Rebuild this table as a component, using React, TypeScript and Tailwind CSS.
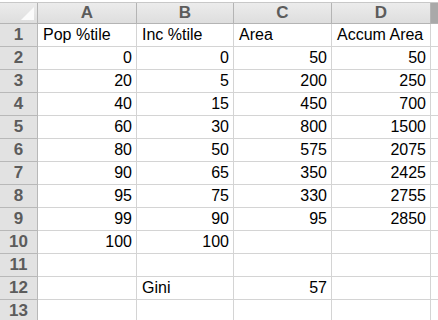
import React from 'react';

const COLS = ['A', 'B', 'C', 'D'];

type Cell = { v: string; num?: boolean };

const ROWS: Cell[][] = [
  [{ v: 'Pop %tile' }, { v: 'Inc %tile' }, { v: 'Area' }, { v: 'Accum Area' }],
  [{ v: '0', num: true }, { v: '0', num: true }, { v: '50', num: true }, { v: '50', num: true }],
  [{ v: '20', num: true }, { v: '5', num: true }, { v: '200', num: true }, { v: '250', num: true }],
  [{ v: '40', num: true }, { v: '15', num: true }, { v: '450', num: true }, { v: '700', num: true }],
  [{ v: '60', num: true }, { v: '30', num: true }, { v: '800', num: true }, { v: '1500', num: true }],
  [{ v: '80', num: true }, { v: '50', num: true }, { v: '575', num: true }, { v: '2075', num: true }],
  [{ v: '90', num: true }, { v: '65', num: true }, { v: '350', num: true }, { v: '2425', num: true }],
  [{ v: '95', num: true }, { v: '75', num: true }, { v: '330', num: true }, { v: '2755', num: true }],
  [{ v: '99', num: true }, { v: '90', num: true }, { v: '95', num: true }, { v: '2850', num: true }],
  [{ v: '100', num: true }, { v: '100', num: true }, { v: '' }, { v: '' }],
  [{ v: '' }, { v: '' }, { v: '' }, { v: '' }],
  [{ v: '' }, { v: 'Gini' }, { v: '57', num: true }, { v: '' }],
  [{ v: '' }, { v: '' }, { v: '' }, { v: '' }],
];

export default function App() {
  return (
    <div className="w-[438px] h-[320px] overflow-hidden bg-white pt-[2px]" style={{ fontFamily: '"Liberation Sans", Arial, sans-serif' }}>
      <div className="grid grid-cols-[38px_99px_97px_98px_99px_1fr] border-t border-[#c8c8c8]">
        {/* column header row */}
        <div className="relative h-[21px] bg-gradient-to-b from-[#ececec] to-[#dedede] border-r border-b border-[#b4b4b4]">
          <div className="absolute right-[3px] bottom-[3px] w-0 h-0 border-l-[13px] border-l-transparent border-b-[13px] border-b-[#fbfbfb]" />
        </div>
        {COLS.map((c) => (
          <div
            key={c}
            className="h-[21px] flex items-center justify-center bg-gradient-to-b from-[#ececec] to-[#dedede] border-r border-b border-[#b4b4b4] text-[17px] font-bold text-[#5c5c5c]"
          >
            {c}
          </div>
        ))}
        <div className="h-[21px] bg-[#a9a9a9] border-b border-[#b4b4b4]" />

        {ROWS.map((row, i) => (
          <React.Fragment key={i}>
            <div className="h-[23px] flex items-center justify-center bg-[#e2e2e2] border-r border-b border-[#b8b8b8] text-[17px] font-bold text-[#5c5c5c]">
              {i + 1}
            </div>
            {row.map((cell, j) => (
              <div
                key={j}
                className={
                  'h-[23px] flex items-center border-r border-b border-[#d4d4d4] text-[16px] text-black ' +
                  (cell.num ? 'justify-end pr-[4px]' : 'justify-start pl-[5px]')
                }
              >
                {cell.v}
              </div>
            ))}
            <div className="h-[23px] border-b border-[#d4d4d4]" />
          </React.Fragment>
        ))}
      </div>
    </div>
  );
}
